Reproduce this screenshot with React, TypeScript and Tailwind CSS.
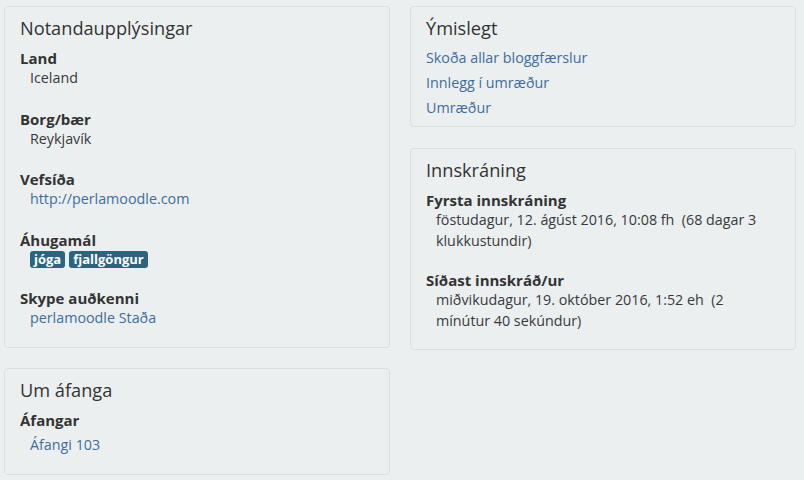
import React from "react";

const font = { fontFamily: '"Open Sans", "Liberation Sans", sans-serif' };

function Card({ title, children, className = "" }: { title: string; children: React.ReactNode; className?: string }) {
  return (
    <div className={`rounded border border-[#dcdfe1] bg-[#eceff0] px-[15px] pt-[9px] ${className}`}>
      <h3 className="text-[18.2px] leading-[24px] text-[#333]">{title}</h3>
      {children}
    </div>
  );
}

function Field({ label, children, valueClass = "" }: { label: string; children: React.ReactNode; valueClass?: string }) {
  return (
    <div>
      <div className="text-[15px] font-bold leading-[20px] text-[#333]">{label}</div>
      <div className={`pl-[10px] text-[14.3px] leading-[20.5px] text-[#373a3c] ${valueClass}`}>{children}</div>
    </div>
  );
}

const link = "text-[#3d6d9e]";
const badge = "rounded-[3px] bg-[#2c6480] px-[4px] text-[13px] font-bold leading-[17px] text-white";

export default function App() {
  return (
    <div style={font} className="min-h-[480px] w-[804px] bg-[#eceff0] pl-[4px] pt-[6px]">
      <div className="grid grid-cols-[386px_386px] gap-x-[20px]">
        {/* left column */}
        <div className="flex flex-col gap-[20px]">
          <Card title="Notandaupplýsingar" className="h-[342px]">
            <div className="flex flex-col gap-[20px] pt-[8px]">
              <Field label="Land">Iceland</Field>
              <Field label="Borg/bær">Reykjavík</Field>
              <Field label="Vefsíða">
                <span className={link}>http://perlamoodle.com</span>
              </Field>
              <Field label="Áhugamál">
                <div className="flex gap-[4px] pt-[1px]">
                  <span className={badge}>jóga</span>
                  <span className={badge}>fjallgöngur</span>
                </div>
              </Field>
              <Field label="Skype auðkenni">
                <span className={link}>perlamoodle Staða</span>
              </Field>
            </div>
          </Card>
          <Card title="Um áfanga" className="h-[107px]">
            <div className="pt-[8px]">
              <Field label="Áfangar" valueClass="pt-[5px]">
                <span className={link}>Áfangi 103</span>
              </Field>
            </div>
          </Card>
        </div>

        {/* right column */}
        <div className="flex flex-col gap-[21px]">
          <Card title="Ýmislegt" className="h-[121px]">
            <div className="flex flex-col pt-[5px] text-[14.3px] leading-[25px]">
              <span className={link}>Skoða allar bloggfærslur</span>
              <span className={link}>Innlegg í umræður</span>
              <span className={link}>Umræður</span>
            </div>
          </Card>
          <Card title="Innskráning" className="h-[202px]">
            <div className="flex flex-col gap-[19px] pt-[8px]">
              <Field label="Fyrsta innskráning">föstudagur, 12. ágúst 2016, 10:08 fh&nbsp; (68 dagar 3 klukkustundir)</Field>
              <Field label="Síðast innskráð/ur">miðvikudagur, 19. október 2016, 1:52 eh&nbsp; (2 mínútur 40 sekúndur)</Field>
            </div>
          </Card>
        </div>
      </div>
    </div>
  );
}
